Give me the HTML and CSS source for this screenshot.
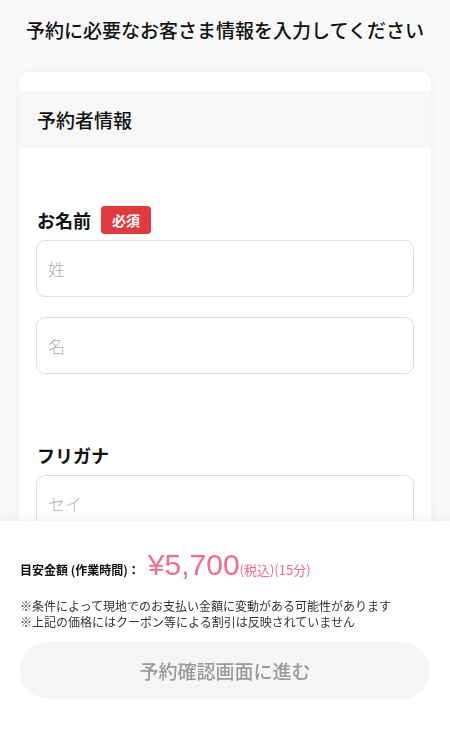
FILE: index.html
```html
<!DOCTYPE html>
<html lang="ja">
<head>
    <meta charset="UTF-8">
    <meta name="viewport" content="width=device-width, initial-scale=1.0">
    <title>予約者情報の入力</title>
    <link rel="stylesheet" href="styles.css">
</head>
<body>
    <h1 class="page-title">予約に必要なお客さま情報を入力してください</h1>
    <main class="card">
        <div class="card-head">予約者情報</div>
        <div class="field">
            <div class="field-label">お名前<span class="badge">必須</span></div>
            <input class="text-input" type="text" placeholder="姓">
            <input class="text-input" type="text" placeholder="名">
        </div>
        <div class="field">
            <div class="field-label">フリガナ</div>
            <input class="text-input" type="text" placeholder="セイ">
            <input class="text-input" type="text" placeholder="メイ">
        </div>
    </main>
    <footer class="summary">
        <div class="price-row">
            <span class="price-label">目安金額 (作業時間)：</span>
            <span class="price">¥5,700</span>
            <span class="price-note">(税込)(15分)</span>
        </div>
        <p class="notes">※条件によって現地でのお支払い金額に変動がある可能性があります<br>※上記の価格にはクーポン等による割引は反映されていません</p>
        <button class="next-btn" disabled>予約確認画面に進む</button>
    </footer>
</body>
</html>
```

FILE: styles.css
```css
body {
    margin: 0;
    background-color: #f8f8f8;
    font-family: "Noto Sans CJK JP", "Noto Sans", sans-serif;
    color: #111;
}
.page-title {
    margin: 0;
    padding-top: 16px;
    font-size: 19px;
    font-weight: 500;
    line-height: 27px;
    text-align: center;
}
.card {
    margin: 29px 19px 0;
    padding: 19px 0 40px;
    background-color: white;
    border-radius: 10px;
    box-shadow: 0 0 10px rgba(0, 0, 0, 0.04);
}
.card-head {
    display: flex;
    align-items: center;
    height: 57px;
    padding: 0 18px;
    background-color: #f7f7f7;
    font-size: 19px;
    font-weight: 500;
}
.field {
    display: flex;
    flex-direction: column;
    padding: 0 17px;
    margin-top: 58px;
}
.field + .field {
    margin-top: 47px;
}
.field-label {
    display: flex;
    align-items: center;
    height: 28px;
    margin: 0 0 6px 1px;
    font-size: 18px;
    font-weight: 700;
}
.badge {
    display: inline-flex;
    align-items: center;
    justify-content: center;
    width: 50px;
    height: 28px;
    margin-left: 10px;
    background-color: #e03a3c;
    border-radius: 4px;
    color: white;
    font-size: 14px;
    font-weight: 700;
}
.text-input {
    box-sizing: border-box;
    height: 57px;
    margin-bottom: 20px;
    padding: 0 11px;
    border: 1.5px solid #dedede;
    border-radius: 9px;
    background: white;
    font-family: inherit;
    font-size: 17px;
    color: #111;
}
.text-input::placeholder {
    color: #b0b0b0;
    font-weight: 300;
}
.summary {
    position: fixed;
    left: 0;
    right: 0;
    bottom: 0;
    height: 216px;
    box-sizing: border-box;
    padding: 26px 20px 0;
    background-color: white;
    box-shadow: 0 -3px 10px rgba(0, 0, 0, 0.05);
}
.price-row {
    display: flex;
    align-items: baseline;
    height: 36px;
}
.price-label {
    font-size: 12px;
    font-weight: 700;
    margin-right: 8px;
}
.price {
    font-family: "Liberation Sans", Arial, sans-serif;
    font-size: 30px;
    color: #f46a8a;
    line-height: 36px;
}
.price-note {
    font-size: 13px;
    color: #f46a8a;
}
.notes {
    margin: 15px 0 0;
    font-size: 12px;
    line-height: 16px;
    color: #333;
}
.next-btn {
    display: block;
    width: 100%;
    height: 57px;
    margin-top: 12px;
    border: none;
    border-radius: 29px;
    background-color: #f5f5f5;
    font-family: inherit;
    font-size: 19px;
    font-weight: 500;
    color: #999;
}
```
